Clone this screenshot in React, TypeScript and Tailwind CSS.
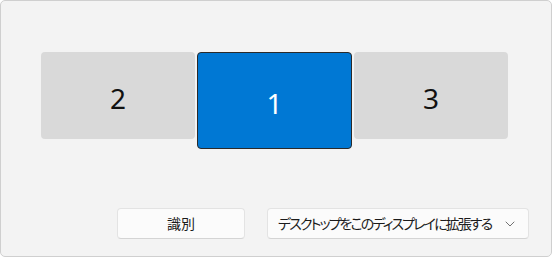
import { ChevronDown } from 'lucide-react';

function Monitor({ n, active = false }: { n: number; active?: boolean }) {
  return (
    <div
      className={
        active
          ? 'w-[155px] h-[97px] rounded-[4px] border border-[#2a2a2a] bg-[#0078d4] text-white flex items-center justify-center pt-[4px]'
          : 'w-[154px] h-[87px] rounded-[4px] bg-[#d9d9d9] text-[#111] flex items-center justify-center pt-[4px]'
      }
    >
      <span className="text-[28px] leading-[28px]">{n}</span>
    </div>
  );
}

export default function App() {
  return (
    <div className="w-[552px] h-[257px] rounded-[5px] border border-[#cfcfcf] bg-[#f3f3f3] flex flex-col font-['Noto_Sans','Noto_Sans_CJK_JP',sans-serif]">
      <div className="flex items-start gap-[2px] pl-[40px] pt-[51px]">
        <Monitor n={2} />
        <Monitor n={1} active />
        <Monitor n={3} />
      </div>

      <div className="flex justify-end gap-[22px] pr-[22px] mt-[59px]">
        <button className="w-[128px] h-[31px] rounded-[4px] border border-[#e3e3e3] border-b-[#d4d4d4] bg-[#fbfbfb] text-[14px] text-[#1b1b1b] flex items-center justify-center">
          識別
        </button>
        <button className="w-[262px] h-[31px] rounded-[4px] border border-[#e3e3e3] border-b-[#d4d4d4] bg-[#fbfbfb] text-[14px] text-[#1b1b1b] flex items-center pl-[10px] pr-[10px]">
          <span className="whitespace-nowrap tracking-[-1.9px] [font-feature-settings:'palt']">デスクトップをこのディスプレイに拡張する</span>
          <ChevronDown className="ml-auto shrink-0 w-[16px] h-[16px] text-[#5c5c5c]" strokeWidth={1.3} />
        </button>
      </div>
    </div>
  );
}
